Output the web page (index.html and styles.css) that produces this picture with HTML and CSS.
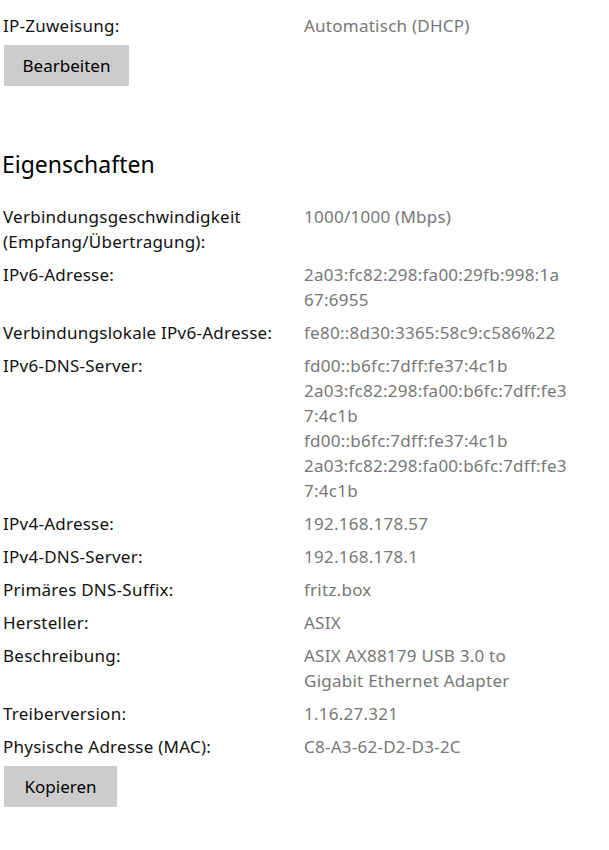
FILE: index.html
```html
<!DOCTYPE html>
<html lang="de">
<head>
<meta charset="utf-8">
<title>Eigenschaften</title>
<link rel="stylesheet" href="styles.css">
</head>
<body>
<main class="page">
  <section class="group">
    <dl class="props">
      <div class="row"><dt>IP-Zuweisung:</dt><dd>Automatisch (DHCP)</dd></div>
    </dl>
    <button class="btn btn-edit" type="button">Bearbeiten</button>
  </section>

  <section class="group group-props">
    <h2 class="heading">Eigenschaften</h2>
    <dl class="props">
      <div class="row"><dt>Verbindungsgeschwindigkeit<br>(Empfang/Übertragung):</dt><dd>1000/1000 (Mbps)</dd></div>
      <div class="row"><dt>IPv6-Adresse:</dt><dd>2a03:fc82:298:fa00:29fb:998:1a<br>67:6955</dd></div>
      <div class="row"><dt>Verbindungslokale IPv6-Adresse:</dt><dd>fe80::8d30:3365:58c9:c586%22</dd></div>
      <div class="row"><dt>IPv6-DNS-Server:</dt><dd><span class="line">fd00::b6fc:7dff:fe37:4c1b</span><span class="line">2a03:fc82:298:fa00:b6fc:7dff:fe3<br>7:4c1b</span><span class="line">fd00::b6fc:7dff:fe37:4c1b</span><span class="line">2a03:fc82:298:fa00:b6fc:7dff:fe3<br>7:4c1b</span></dd></div>
      <div class="row"><dt>IPv4-Adresse:</dt><dd>192.168.178.57</dd></div>
      <div class="row"><dt>IPv4-DNS-Server:</dt><dd>192.168.178.1</dd></div>
      <div class="row"><dt>Primäres DNS-Suffix:</dt><dd>fritz.box</dd></div>
      <div class="row"><dt>Hersteller:</dt><dd>ASIX</dd></div>
      <div class="row"><dt>Beschreibung:</dt><dd>ASIX AX88179 USB 3.0 to<br>Gigabit Ethernet Adapter</dd></div>
      <div class="row"><dt>Treiberversion:</dt><dd>1.16.27.321</dd></div>
      <div class="row"><dt>Physische Adresse (MAC):</dt><dd>C8-A3-62-D2-D3-2C</dd></div>
    </dl>
    <button class="btn btn-copy" type="button">Kopieren</button>
  </section>
</main>
</body>
</html>
```

FILE: styles.css
```css
* { box-sizing: border-box; }

html, body {
  margin: 0;
  padding: 0;
  background: #ffffff;
}

body {
  font-family: "Noto Sans", "Open Sans", sans-serif;
  font-size: 17px;
  letter-spacing: 0.25px;
  color: #000000;
}

.page {
  padding: 13px 0 0 3px;
}

.group {
  display: flex;
  flex-direction: column;
  align-items: flex-start;
}

.group-props {
  margin-top: 62px;
}

.props {
  margin: 0;
  display: flex;
  flex-direction: column;
  gap: 8px;
  width: 100%;
}

.row {
  display: grid;
  grid-template-columns: 301px 1fr;
  line-height: 25px;
}

.row dt {
  margin: 0;
  color: #111111;
}

.row dd {
  margin: 0;
  color: #777777;
}

.line {
  display: block;
}

.heading {
  margin: 0 0 24px -1px;
  font-size: 23px;
  font-weight: 400;
  line-height: 32px;
  letter-spacing: 0;
  color: #000000;
}

.btn {
  margin-top: 7px;
  height: 41px;
  padding: 0;
  border: 0;
  border-radius: 0;
  background: #cccccc;
  color: #000000;
  font: inherit;
  letter-spacing: 0;
  line-height: 41px;
  text-align: center;
}

.btn-edit { width: 125px; margin-left: 1px; }
.btn-copy { width: 113px; margin-left: 1px; }
```
